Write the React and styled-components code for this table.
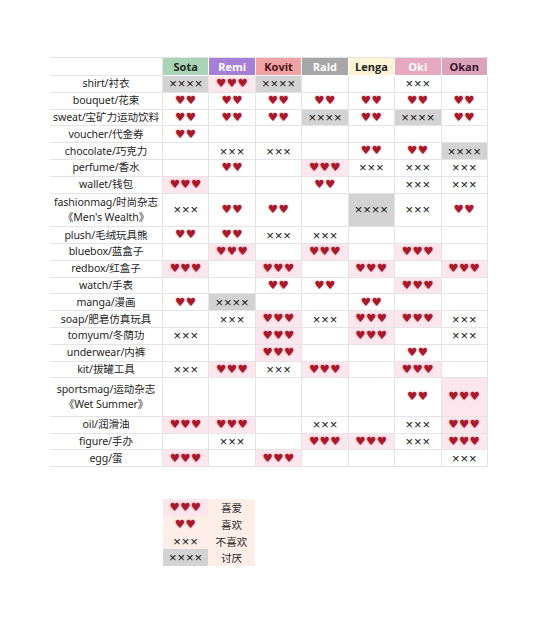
import React from "react";
import styled, { createGlobalStyle } from "styled-components";

const Global = createGlobalStyle`
  html, body { margin: 0; padding: 0; background: #ffffff; }
  body { font-family: "Noto Sans", "Noto Sans CJK SC", sans-serif; }
`;

const COLS = "113px repeat(7, 46.43px)";

const people = [
  { name: "Sota", bg: "#a9d4b5", fg: "#1f2a22" },
  { name: "Remi", bg: "#a680d6", fg: "#ffffff" },
  { name: "Kovit", bg: "#f1a2a4", fg: "#4a1418" },
  { name: "Rald", bg: "#a7a7a7", fg: "#ffffff" },
  { name: "Lenga", bg: "#fdf5d6", fg: "#222222" },
  { name: "Oki", bg: "#e8a8c0", fg: "#ffffff" },
  { name: "Okan", bg: "#dba4bb", fg: "#3a1626" },
];

const rows = [
  { label: ["shirt/衬衣"], v: ["X", "3", "X", "", "", "x", ""] },
  { label: ["bouquet/花束"], v: ["2", "2", "2", "2", "2", "2", "2"] },
  { label: ["sweat/宝矿力运动饮料"], v: ["2", "2", "2", "X", "2", "X", "2"] },
  { label: ["voucher/代金券"], v: ["2", "", "", "", "", "", ""] },
  { label: ["chocolate/巧克力"], v: ["", "x", "x", "", "2", "2", "X"] },
  { label: ["perfume/香水"], v: ["", "2", "", "3", "x", "x", "x"] },
  { label: ["wallet/钱包"], v: ["3", "", "", "2", "", "x", "x"] },
  { label: ["fashionmag/时尚杂志", "《Men's Wealth》"], v: ["x", "2", "2", "", "X", "x", "2"], h: 33.6 },
  { label: ["plush/毛绒玩具熊"], v: ["2", "2", "x", "x", "", "", ""] },
  { label: ["bluebox/蓝盒子"], v: ["", "3", "", "3", "", "3", ""] },
  { label: ["redbox/红盒子"], v: ["3", "", "3", "", "3", "", "3"] },
  { label: ["watch/手表"], v: ["", "", "2", "2", "", "3", ""] },
  { label: ["manga/漫画"], v: ["2", "X", "", "", "2", "", ""] },
  { label: ["soap/肥皂仿真玩具"], v: ["", "x", "3", "x", "3", "3", "x"] },
  { label: ["tomyum/冬荫功"], v: ["x", "", "3", "", "3", "", "x"] },
  { label: ["underwear/内裤"], v: ["", "", "3", "", "", "2", ""] },
  { label: ["kit/拔罐工具"], v: ["x", "3", "x", "3", "", "3", ""] },
  { label: ["sportsmag/运动杂志", "《Wet Summer》"], v: ["", "", "", "", "", "2", "3"], h: 38.5 },
  { label: ["oil/润滑油"], v: ["3", "3", "", "x", "", "x", "3"] },
  { label: ["figure/手办"], v: ["", "x", "", "3", "3", "x", "3"] },
  { label: ["egg/蛋"], v: ["3", "", "3", "", "", "", "x"] },
];

const legend = [
  { code: "3", text: "喜爱" },
  { code: "2", text: "喜欢" },
  { code: "x", text: "不喜欢" },
  { code: "X", text: "讨厌" },
];

const Page = styled.div`
  padding: 57px 0 40px 50px;
  width: 551px;
  box-sizing: border-box;
`;

const Table = styled.div`
  display: flex;
  flex-direction: column;
  width: 438px;
  border-top: 1px solid #e2e2e2;
  border-left: 1px solid #e2e2e2;
  box-sizing: border-box;
`;

const Row = styled.div`
  display: grid;
  grid-template-columns: ${COLS};
  height: ${(p) => p.$h}px;
  margin-left: -1px;
`;

const Cell = styled.div`
  box-sizing: border-box;
  border-right: 1px solid #e4e4e4;
  border-bottom: 1px solid #e4e4e4;
  display: flex;
  align-items: center;
  justify-content: center;
  background: ${(p) => p.$bg || "#ffffff"};
  overflow: hidden;
`;

const HeadCell = styled(Cell)`
  font-family: "Open Sans", "Noto Sans", sans-serif;
  font-weight: 700;
  font-size: 11px;
  color: ${(p) => p.$fg};
  border-right-color: #ffffff;
  border-bottom-color: #ffffff;
`;

const LabelCell = styled(Cell)`
  flex-direction: column;
  font-family: "Noto Sans", "Noto Sans CJK SC", sans-serif;
  font-size: 10.6px;
  line-height: 15px;
  color: #262626;
  white-space: nowrap;
  letter-spacing: -0.1px;
`;

const Hearts = styled.span`
  font-family: "DejaVu Sans", sans-serif;
  font-size: 11.5px;
  line-height: 1;
  color: #a8192c;
  letter-spacing: 0.4px;
  text-shadow: 0 0 2px rgba(226, 90, 110, 0.55);
`;

const Crosses = styled.span`
  font-family: "Liberation Sans", sans-serif;
  font-size: 13px;
  line-height: 1;
  color: #141414;
  letter-spacing: 0.9px;
  margin-right: -0.9px;
`;

const Mark = ({ code }) => {
  if (code === "3") return <Hearts>♥♥♥</Hearts>;
  if (code === "2") return <Hearts>♥♥</Hearts>;
  if (code === "x") return <Crosses>×××</Crosses>;
  if (code === "X") return <Crosses>××××</Crosses>;
  return null;
};

const cellBg = (code) =>
  code === "3" ? "#fce7ee" : code === "X" ? "#d3d3d3" : "#ffffff";

const Legend = styled.div`
  display: grid;
  grid-template-columns: 45px 47px;
  grid-auto-rows: 16.75px;
  margin: 32px 0 0 113px;
  width: 92px;
`;

const LegendSymbol = styled.div`
  display: flex;
  align-items: center;
  justify-content: center;
  background: ${(p) => p.$bg};
`;

const LegendText = styled.div`
  display: flex;
  align-items: center;
  justify-content: center;
  background: #fdeee7;
  font-family: "Noto Sans CJK SC", sans-serif;
  font-size: 10.6px;
  color: #262626;
`;

const legendBg = (code) =>
  code === "3" ? "#fce5ec" : code === "X" ? "#d3d3d3" : "#fdeee7";

export default function App() {
  return (
    <>
      <Global />
      <Page>
        <Table>
          <Row $h={18}>
            <Cell />
            {people.map((p) => (
              <HeadCell key={p.name} $bg={p.bg} $fg={p.fg}>
                {p.name}
              </HeadCell>
            ))}
          </Row>
          {rows.map((r) => (
            <Row key={r.label[0]} $h={r.h || 16.8}>
              <LabelCell>
                {r.label.map((l) => (
                  <span key={l}>{l}</span>
                ))}
              </LabelCell>
              {r.v.map((c, i) => (
                <Cell key={i} $bg={cellBg(c)}>
                  <Mark code={c} />
                </Cell>
              ))}
            </Row>
          ))}
        </Table>
        <Legend>
          {legend.map((l) => (
            <React.Fragment key={l.code}>
              <LegendSymbol $bg={legendBg(l.code)}>
                <Mark code={l.code} />
              </LegendSymbol>
              <LegendText>{l.text}</LegendText>
            </React.Fragment>
          ))}
        </Legend>
      </Page>
    </>
  );
}
